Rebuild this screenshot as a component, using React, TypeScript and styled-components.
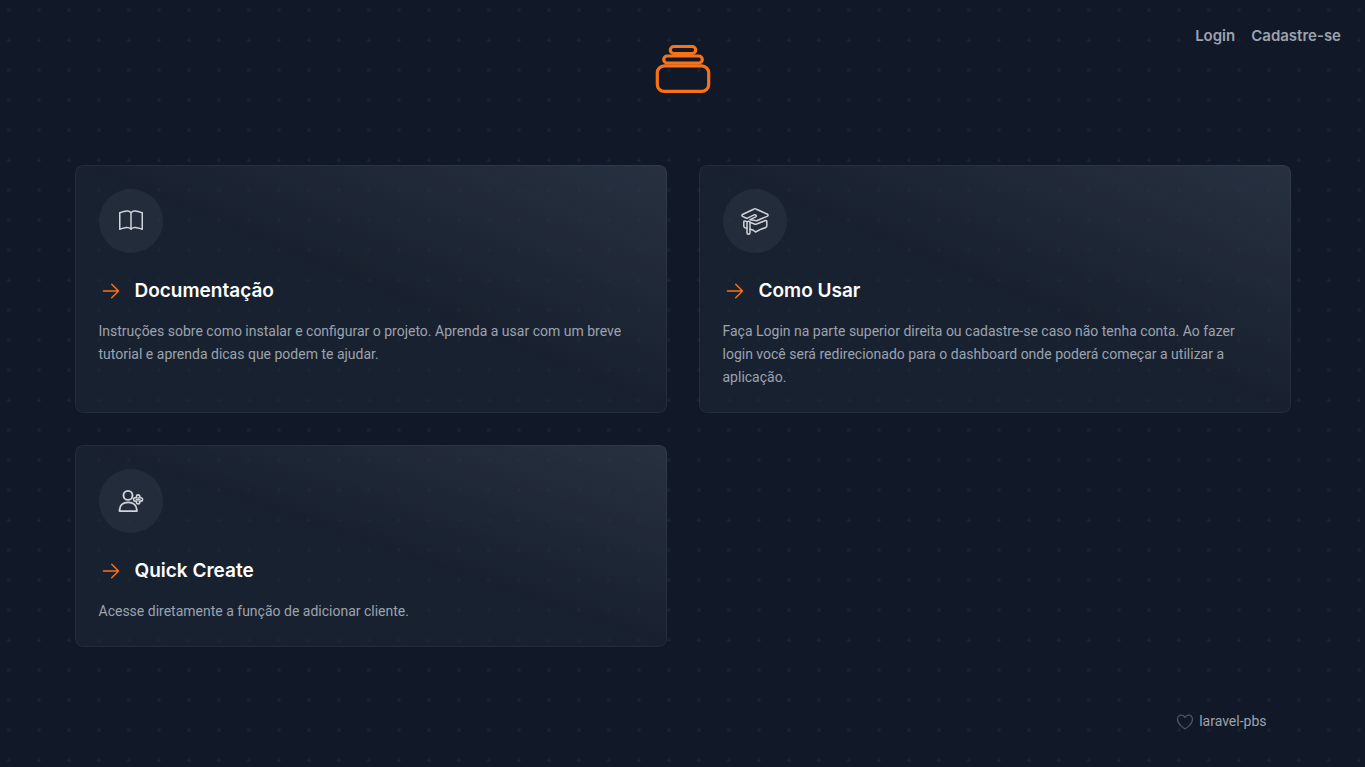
import React from "react";
import styled, { createGlobalStyle } from "styled-components";
import { BsBook } from "react-icons/bs";

const dot =
  "url(\"data:image/svg+xml,%3Csvg width='30' height='30' viewBox='0 0 30 30' fill='none' xmlns='http://www.w3.org/2000/svg'%3E%3Ccircle cx='1.4' cy='1.4' r='1.2' fill='rgba(255,255,255,0.055)'/%3E%3C/svg%3E\")";

const GlobalStyle = createGlobalStyle`
  *, *::before, *::after { box-sizing: border-box; }
  body {
    margin: 0;
    background: #111827;
    font-family: Roboto, "Liberation Sans", sans-serif;
    line-height: 24px;
  }
  h2, p { margin: 0; }
  a { color: inherit; text-decoration: none; }
`;

const Page = styled.div`
  position: relative;
  display: flex;
  flex-direction: column;
  align-items: center;
  justify-content: center;
  min-height: 100vh;
  background: ${dot} center;
`;

const Nav = styled.nav`
  position: absolute;
  top: 0;
  right: 0;
  display: flex;
  gap: 16px;
  padding: 24px;
`;

const NavLink = styled.a`
  color: #9ca3af;
  font-family: Inter, "Liberation Sans", sans-serif;
  font-size: 15px;
  font-weight: 600;
  &:hover { color: #fff; }
`;

const Container = styled.div`
  width: 100%;
  max-width: 1280px;
  padding: 32px;
`;

const LogoRow = styled.header`
  display: flex;
  justify-content: center;
  padding: 9px 0 7px;
`;

const Grid = styled.main`
  display: grid;
  grid-template-columns: repeat(2, minmax(0, 1fr));
  gap: 32px;
  margin-top: 64px;
  @media (max-width: 767px) {
    grid-template-columns: minmax(0, 1fr);
  }
`;

const Card = styled.a`
  padding: 24px;
  border-radius: 8px;
  background: linear-gradient(to bottom left, rgba(55, 65, 81, 0.5), transparent, transparent)
    rgba(31, 41, 55, 0.5);
  box-shadow: inset 0 0 0 1px rgba(255, 255, 255, 0.05);
`;

const IconCircle = styled.div`
  display: flex;
  align-items: center;
  justify-content: center;
  width: 64px;
  height: 64px;
  border-radius: 50%;
  background: rgba(55, 65, 81, 0.35);
  color: #d1d5db;
`;

const TitleRow = styled.div`
  display: flex;
  align-items: center;
  gap: 12px;
  margin-top: 24px;
`;

const Title = styled.h2`
  color: #fff;
  font-family: Inter, "Liberation Sans", sans-serif;
  font-size: 19px;
  font-weight: 600;
  line-height: 28px;
`;

const Description = styled.p`
  margin-top: 15px;
  color: #9ca3af;
  font-size: 14px;
  line-height: 23px;
`;

const Footer = styled.footer`
  display: flex;
  justify-content: flex-end;
  margin-top: 64px;
  padding: 0 24px;
`;

const FooterLink = styled.a`
  display: flex;
  align-items: center;
  gap: 4px;
  color: #9ca3af;
  font-size: 14px;
  line-height: 21px;
`;

const Logo = () => (
  <svg width="56" height="50" viewBox="0 0 56 50" fill="none" stroke="#f97316" strokeWidth="3.2" aria-hidden="true">
    <rect x="15.3" y="2.5" width="25.4" height="7" rx="3.5" />
    <rect x="8.7" y="12" width="38.6" height="7" rx="3.5" />
    <rect x="2.3" y="21.8" width="51.4" height="25.6" rx="7" />
  </svg>
);

const Arrow = () => (
  <svg width="24" height="24" viewBox="0 0 24 24" fill="none" stroke="#f97316" strokeWidth="1.5" aria-hidden="true">
    <path strokeLinecap="round" strokeLinejoin="round" d="M4.5 12h15m0 0l-6.75-6.75M19.5 12l-6.75 6.75" />
  </svg>
);

const CapIcon = () => (
  <svg width="30" height="30" viewBox="0 0 30 30" fill="none" stroke="currentColor" strokeWidth="1.5" strokeLinecap="round" strokeLinejoin="round" aria-hidden="true">
    <path d="M6.5 12.2L3 10.6C1.5 9.9 1.5 8.9 3 8.2L13.6 3.2Q15 2.5 16.4 3.2L27 8C28.5 8.7 28.5 9.7 27 10.4L17.2 14.5Q16.3 14.9 15.3 14.6L10 13.7L15.8 10.8C17.2 9.8 15.6 8.4 14 8.9L7 12.3" />
    <rect x="7" y="15.3" width="3" height="13" rx="1.5" />
    <path d="M6.8 15.6L5 14.9Q3.8 14.8 3.8 16V20Q3.8 21.3 5 21.7L7 22.2" />
    <path d="M10 16.2L14.4 18Q15.5 18.4 16.6 18L25.5 14.5Q26.8 14.1 26.8 15.4V19.8Q26.8 20.9 25.8 21.5L21 23.2L15.5 26L12.8 23.9L10 23.2" />
  </svg>
);

const AddUserIcon = () => (
  <svg width="28" height="28" viewBox="0 0 28 28" fill="none" stroke="currentColor" strokeWidth="1.9" strokeLinejoin="round" aria-hidden="true">
    <circle cx="11" cy="8.4" r="4.5" />
    <path d="M2.6 24.1V23.2C2.6 18.4 6 15.4 11.1 15.4S19.8 18.4 19.8 23.2V24.1Z" />
    <path strokeWidth="1.6" d="M19.4 10.7V9.4Q19.4 7.9 21.1 7.9T22.8 9.4V10.7H24.1Q25.6 10.7 25.6 12.4T24.1 14.1H22.8V15.4Q22.8 16.9 21.1 16.9T19.4 15.4V14.1H18.1Q16.6 14.1 16.6 12.4T18.1 10.7Z" />
    <path strokeWidth="1.2" d="M21.1 10V14.8M18.7 12.4H23.5" />
  </svg>
);

const Heart = () => (
  <svg width="20" height="20" viewBox="0 0 24 24" fill="none" stroke="#4b5563" strokeWidth="1.5" aria-hidden="true">
    <path strokeLinecap="round" strokeLinejoin="round" d="M21 8.25c0-2.485-2.099-4.5-4.688-4.5-1.935 0-3.597 1.126-4.312 2.733-.715-1.607-2.377-2.733-4.313-2.733C5.1 3.75 3 5.765 3 8.25c0 7.22 9 12 9 12s9-4.78 9-12z" />
  </svg>
);

const cards = [
  {
    title: "Documentação",
    icon: <BsBook size={24} />,
    text: "Instruções sobre como instalar e configurar o projeto. Aprenda a usar com um breve tutorial e aprenda dicas que podem te ajudar.",
  },
  {
    title: "Como Usar",
    icon: <CapIcon />,
    text: "Faça Login na parte superior direita ou cadastre-se caso não tenha conta. Ao fazer login você será redirecionado para o dashboard onde poderá começar a utilizar a aplicação.",
  },
  {
    title: "Quick Create",
    icon: <AddUserIcon />,
    text: "Acesse diretamente a função de adicionar cliente.",
  },
];

export default function App() {
  return (
    <>
      <GlobalStyle />
      <Page>
        <Nav>
          <NavLink href="#login">Login</NavLink>
          <NavLink href="#register">Cadastre-se</NavLink>
        </Nav>
        <Container>
          <LogoRow>
            <Logo />
          </LogoRow>
          <Grid>
            {cards.map((card) => (
              <Card key={card.title} href="#">
                <IconCircle>{card.icon}</IconCircle>
                <TitleRow>
                  <Arrow />
                  <Title>{card.title}</Title>
                </TitleRow>
                <Description>{card.text}</Description>
              </Card>
            ))}
          </Grid>
          <Footer>
            <FooterLink href="#">
              <Heart />
              laravel-pbs
            </FooterLink>
          </Footer>
        </Container>
      </Page>
    </>
  );
}
